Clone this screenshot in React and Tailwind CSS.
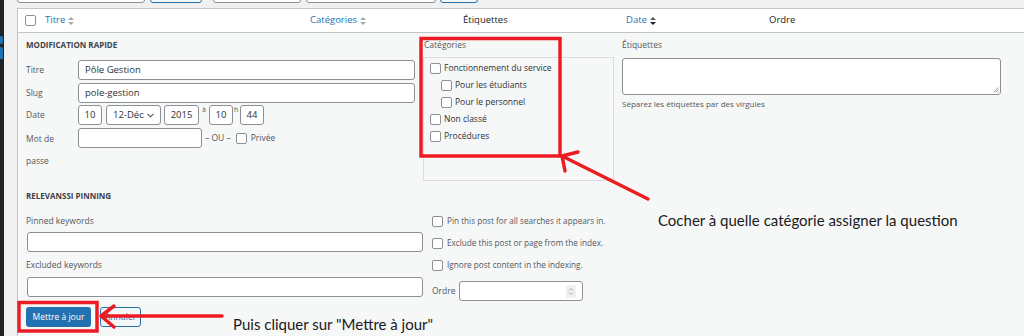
import React from "react";

const ui = { fontFamily: '"Open Sans", "Noto Sans", sans-serif' };
const note = { fontFamily: 'Lato, "Open Sans", sans-serif' };

function Cb() {
  return <span className="inline-block w-[11px] h-[11px] rounded-[2px] border border-[#8c8f94] bg-white shrink-0" />;
}

function Sort({ active }) {
  return (
    <svg width="6" height="10" viewBox="0 0 6 10" className="ml-[3px]">
      <path d="M0 4 L3 1 L6 4 Z" fill={active ? "#50575e" : "#a7aaad"} />
      <path d="M0 6 L3 9 L6 6 Z" fill={active ? "#1d2327" : "#a7aaad"} />
    </svg>
  );
}

function Input({ className, children }) {
  return (
    <div className={`h-[20px] border border-[#8c8f94] rounded-[3px] bg-white flex items-center text-[9.5px] text-[#2c3338] ${className}`}>
      {children}
    </div>
  );
}

export default function App() {
  return (
    <div className="w-[1024px] h-[336px] relative overflow-hidden bg-[#f0f0f1] flex" style={ui}>
      {/* admin sidebar edge */}
      <div className="w-[4px] h-full bg-[#1d2327] flex flex-col">
        <div className="h-[36px]" />
        <div className="h-[8px] w-[3px] bg-[#2271b1] rounded-r-[2px]" />
        <div className="h-[3px]" />
        <div className="h-[12px] w-[3px] bg-[#2271b1] rounded-tr-[2px]" />
      </div>

      <div className="flex-1 pl-[13px] flex flex-col">
        {/* filter bar (cut off) */}
        <div className="h-[8px] flex items-end">
          <div className="w-[128px] h-[20px] mb-[5px] border border-[#8c8f94] rounded-[3px] bg-white" />
          <div className="w-[52px] h-[20px] mb-[5px] ml-[5px] border border-[#2271b1] rounded-[3px] bg-[#f6f7f7]" />
          <div className="w-[88px] h-[20px] mb-[5px] ml-[11px] border border-[#8c8f94] rounded-[3px] bg-white" />
          <div className="w-[130px] h-[20px] mb-[5px] ml-[5px] border border-[#8c8f94] rounded-[3px] bg-white" />
          <div className="w-[38px] h-[20px] mb-[5px] ml-[4px] border border-[#2271b1] rounded-[3px] bg-[#f6f7f7]" />
        </div>

        {/* table */}
        <div className="flex-1 border-l border-t border-[#c3c4c7] flex flex-col">
          <div className="h-[24px] bg-white border-b border-[#c3c4c7] flex items-center text-[9.5px]">
            <div className="w-[22px] pl-[7px] flex items-center"><Cb /></div>
            <div className="w-[270px] pl-[5px] flex items-center text-[#2271b1]">Titre<Sort /></div>
            <div className="w-[153px] flex items-center text-[#2271b1]">Catégories<Sort /></div>
            <div className="w-[163px] text-[#1d2327]">Étiquettes</div>
            <div className="w-[143px] flex items-center text-[#2271b1]">Date<Sort active /></div>
            <div className="text-[#1d2327]">Ordre</div>
          </div>

          <div className="flex-1 bg-[#f6f7f7] flex flex-col pl-[8px] text-[8.5px] text-[#50575e]">
            {/* top three columns */}
            <div className="flex pt-[6px] h-[157px]">
              {/* left */}
              <div className="w-[389px] flex flex-col">
                <div className="h-[12px] leading-[12px] font-bold uppercase text-[#3c434a] text-[8px]">Modification rapide</div>
                <div className="flex items-center mt-[9px]">
                  <div className="w-[52px]">Titre</div>
                  <Input className="flex-1 pl-[6px]">Pôle Gestion</Input>
                </div>
                <div className="flex items-center mt-[3px]">
                  <div className="w-[52px]">Slug</div>
                  <Input className="flex-1 pl-[6px]">pole-gestion</Input>
                </div>
                <div className="flex items-center mt-[2px]">
                  <div className="w-[52px]">Date</div>
                  <Input className="w-[24px] justify-center">10</Input>
                  <Input className="w-[55px] ml-[4px] pl-[6px] justify-between pr-[6px]">
                    <span>12-Déc</span>
                    <svg width="7" height="5" viewBox="0 0 7 5"><path d="M0.5 0.8 L3.5 3.8 L6.5 0.8" fill="none" stroke="#50575e" strokeWidth="1.1" /></svg>
                  </Input>
                  <Input className="w-[35px] ml-[3px] justify-center">2015</Input>
                  <span className="self-start text-[7px] leading-[10px] ml-[3px] w-[7px]">à</span>
                  <Input className="w-[24px] justify-center">10</Input>
                  <span className="self-start text-[7px] leading-[10px] ml-[1px] w-[6px]">h</span>
                  <Input className="w-[24px] justify-center">44</Input>
                </div>
                <div className="flex items-start mt-[3px]">
                  <div className="w-[52px] leading-[22px]">Mot de<br />passe</div>
                  <Input className="w-[124px]" />
                  <div className="h-[20px] flex items-center ml-[3px]">
                    <span>– OU –</span>
                    <span className="ml-[5px] flex"><Cb /></span>
                    <span className="ml-[4px]">Privée</span>
                  </div>
                </div>
              </div>

              {/* categories */}
              <div className="w-[191px] ml-[8px] flex flex-col">
                <div className="h-[12px] leading-[12px] pl-[1px]">Catégories</div>
                <div className="mt-[6px] h-[124px] border border-[#dcdcde] pt-[2px] pl-[6px] text-[8.5px] text-[#2c3338]">
                  <div className="h-[17px] flex items-center gap-[3px]"><Cb /><span>Fonctionnement du service</span></div>
                  <div className="h-[17px] flex items-center gap-[3px] pl-[11px]"><Cb /><span>Pour les étudiants</span></div>
                  <div className="h-[17px] flex items-center gap-[3px] pl-[11px]"><Cb /><span>Pour le personnel</span></div>
                  <div className="h-[17px] flex items-center gap-[3px]"><Cb /><span>Non classé</span></div>
                  <div className="h-[17px] flex items-center gap-[3px]"><Cb /><span>Procédures</span></div>
                </div>
              </div>

              {/* tags */}
              <div className="w-[379px] ml-[8px] flex flex-col">
                <div className="h-[12px] leading-[12px]">Étiquettes</div>
                <div className="mt-[7px] h-[37px] border border-[#8c8f94] rounded-[3px] bg-white relative">
                  <svg width="6" height="6" viewBox="0 0 6 6" className="absolute right-[1px] bottom-[1px]">
                    <path d="M5.5 0.5 L0.5 5.5 M5.5 2.5 L2.5 5.5 M5.5 4.5 L4.5 5.5" stroke="#8c8f94" strokeWidth="0.8" />
                  </svg>
                </div>
                <div className="mt-[3px] h-[12px] leading-[12px] text-[8px]">Séparez les étiquettes par des virgules</div>
              </div>
            </div>

            {/* relevanssi */}
            <div className="h-[12px] leading-[12px] font-bold uppercase text-[#3c434a] text-[8px]">Relevanssi pinning</div>
            <div className="flex mt-[8px]">
              <div className="w-[397px] flex flex-col pt-[2px]">
                <div className="h-[18px] leading-[18px]">Pinned keywords</div>
                <div className="ml-[1px] mt-[2px] h-[20px] border border-[#8c8f94] rounded-[3px] bg-white" />
                <div className="h-[18px] leading-[18px] mt-[4px]">Excluded keywords</div>
                <div className="ml-[1px] mt-[3px] h-[20px] border border-[#8c8f94] rounded-[3px] bg-white" />
              </div>
              <div className="ml-[9px] flex flex-col text-[8.2px]">
                <div className="h-[22px] flex items-center gap-[4px]"><Cb /><span>Pin this post for all searches it appears in.</span></div>
                <div className="h-[22px] flex items-center gap-[4px]"><Cb /><span>Exclude this post or page from the index.</span></div>
                <div className="h-[22px] flex items-center gap-[4px]"><Cb /><span>Ignore post content in the indexing.</span></div>
                <div className="h-[20px] mt-[5px] flex items-center text-[8.5px]">
                  <span className="w-[27px]">Ordre</span>
                  <div className="w-[124px] h-[20px] border border-[#8c8f94] rounded-[3px] bg-white flex items-center justify-end pr-[6px]">
                    <div className="w-[10px] h-[13px] bg-[#f0f0f1] rounded-[2px] flex items-center justify-center">
                      <svg width="6" height="9" viewBox="0 0 6 9"><path d="M1 3.5 L3 1.5 L5 3.5 M1 5.5 L3 7.5 L5 5.5" fill="none" stroke="#8c8f94" strokeWidth="0.8" /></svg>
                    </div>
                  </div>
                </div>
              </div>
            </div>

            {/* buttons */}
            <div className="flex mt-[6px]">
              <div className="w-[65px] h-[20px] rounded-[3px] bg-[#2271b1] text-white text-[8.5px] flex items-center justify-center">Mettre à jour</div>
              <div className="w-[41px] h-[20px] ml-[9px] rounded-[3px] border border-[#2271b1] bg-[#f6f7f7] text-[#2271b1] text-[8.5px] flex items-center justify-center">Annuler</div>
            </div>
          </div>
        </div>
      </div>

      {/* annotations */}
      <svg className="absolute inset-0 pointer-events-none" width="1024" height="336" viewBox="0 0 1024 336">
        <g stroke="#ed1c24" strokeWidth="3.5" fill="none" strokeLinecap="round">
          <rect x="421" y="38.5" width="139" height="117.5" strokeLinecap="butt" />
          <rect x="19" y="302.5" width="78" height="28.5" strokeLinecap="butt" />
          <path d="M648 199 L562 156 M562 156 L578 152 M562 156 L565 171" />
          <path d="M222 316 L101 316 M101 316 L114 306 M101 316 L114 327" />
        </g>
      </svg>
      <div className="absolute left-[658px] top-[210px] text-[15px] leading-[20px] text-[#1a1a1a]" style={note}>
        Cocher à quelle catégorie assigner la question
      </div>
      <div className="absolute left-[233px] top-[314px] text-[15px] leading-[20px] text-[#1a1a1a]" style={note}>
        Puis cliquer sur "Mettre à jour"
      </div>
    </div>
  );
}
